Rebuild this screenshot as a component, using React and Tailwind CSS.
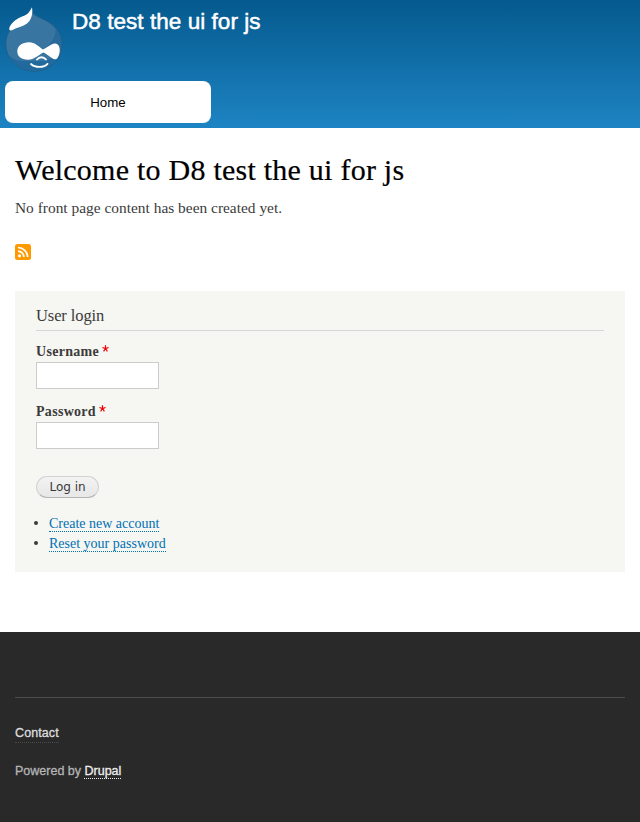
const serif = 'font-["Liberation_Serif",serif]';

function Logo() {
  return (
    <svg className="block h-[66px] w-[60px] shrink-0" viewBox="0 0 60 66">
      <path d="M27 1.300C27 5 27.500 7.500 30 9C33 11 36 12 39 13.500C50 19 57 27 57 38C57 54 45 65 29 65C13 65 0.800 53 0.800 38C0.800 29 5 23 10 18C16 12 26 12 27 1.300Z" fill="#3875a1" stroke="#1d5880" strokeWidth="0.700" />
      <path d="M39 13.800C49.500 19 56.600 27 56.600 38C56.600 46 54 51 51 54L36 46C44 40 51 32 50.500 24C50 19 45 16.500 39 13.800Z" fill="#26689a" opacity="0.850" />
      <path d="M2.500 48C9 55 14 55 24 55L40 55L55 49C51 58.500 42 64.500 29 64.500C15 64.500 6 58 2.500 48Z" fill="#1f679d" opacity="0.850" />
      <path d="M27 1.300C23 9 21 9 16 11C10 13.500 5.500 18 4.300 22C3.800 24.500 5.500 25 7.500 24C12 21.500 18 20.500 22 17.500C26.500 14 28 8 27 1.300Z" fill="#fff" />
      <path d="M24 36.300C30 36.300 34 41 38 43.500C42 42 45 38 50 37.500C55 37 56.500 46 52.500 52C50 56 45 50 38.500 46.500C33 49 29.500 53.700 23 53.700C16 53.700 12 50 12.300 45C12.500 40 17 36.300 24 36.300Z" fill="#fff" />
      <path d="M32 53.500C34.500 50.500 38.500 50.500 41 53.500M26 58C30 61.800 39 62 42.500 57.800" fill="none" stroke="#fff" strokeWidth="1.800" strokeLinecap="round" />
    </svg>
  );
}

function FeedIcon() {
  return (
    <svg className="block size-4" viewBox="0 0 16 16">
      <rect width="16" height="16" rx="2.500" fill="#ff9900" />
      <circle cx="4.500" cy="11.800" r="1.600" fill="#fff" />
      <path d="M3 7.200a6 6 0 0 1 5.900 5.900M3 3.500a9.700 9.700 0 0 1 9.600 9.600" fill="none" stroke="#fff" strokeWidth="1.700" />
    </svg>
  );
}

function Star() {
  return (
    <svg className="mt-[2px] ml-[3px] block size-[7px]" viewBox="0 0 7 7">
      <path d="M3.500 0.200V3.500M0.400 2.500L3.500 3.500L6.600 2.500M1.600 6.300L3.500 3.500L5.400 6.300" fill="none" stroke="#ee0000" strokeWidth="1.200" />
    </svg>
  );
}

function Field({ label, type }) {
  return (
    <label className="block h-[60px]">
      <span className="flex h-[19px]">
        <span className="text-[14px] leading-[18px] font-bold tracking-[0.3px]">{label}</span>
        <Star />
      </span>
      <input type={type} className="block h-[27px] w-[123px] border border-[#ccc] bg-white px-1 outline-none" />
    </label>
  );
}

export default function App() {
  return (
    <div className={`flex h-[822px] w-[640px] flex-col overflow-hidden bg-white text-[#3b3b3b] ${serif}`}>
      <header className='h-32 bg-linear-to-b from-[#055a8e] to-[#1d84c3] px-[5px] font-["Liberation_Sans",Arial,sans-serif]'>
        <div className="flex h-[81px] pt-[6px]">
          <Logo />
          <div className="ml-[7px] h-[30px] text-[22.5px] leading-[31px] tracking-[0.05px] whitespace-nowrap text-[#fffeff] [-webkit-text-stroke:0.5px_#fffeff]">D8 test the ui for js</div>
        </div>
        <nav className="flex h-[42px] w-[206px] items-center justify-center rounded-lg bg-white pt-px text-[13.3px] text-black">Home</nav>
      </header>

      <main className="h-[504px] px-[15px] pt-6">
        <h1 className="h-9 text-[30px] leading-9 tracking-[0.24px] whitespace-nowrap text-black [-webkit-text-stroke:0.2px_#000]">Welcome to D8 test the ui for js</h1>
        <p className="mt-2.5 h-5 text-[15.4px] leading-5 tracking-[0.01px] whitespace-nowrap">No front page content has been created yet.</p>
        <div className="mt-[26px]"><FeedIcon /></div>

        <section className="mt-[31px] h-[281px] bg-[#f6f6f2] px-[21px] pt-[14px]">
          <h2 className="h-[26px] border-b border-[#d6d6d6] text-[16.5px] leading-[21px] tracking-[-0.1px]">User login</h2>
          <form className="pt-3">
            <Field label="Username" type="text" />
            <Field label="Password" type="password" />
            <button type="button" className='mt-[13px] flex h-[22px] w-[63px] items-center justify-center rounded-full border border-[#d2d2d2] border-b-[#b4b4b4] bg-linear-to-b from-[#f3f3f3] to-[#e7e7e7] font-["DejaVu_Sans",sans-serif] text-[12px] text-[#3a3a3a]'>Log in</button>
          </form>
          <ul className="mt-[17px] text-[14px] leading-5 text-[#0071b3]">
            <li className="flex h-5 items-start before:mt-[6px] before:-ml-[2px] before:mr-[11px] before:size-1 before:rounded-full before:bg-[#3b3b3b]"><a className="h-[17px] border-b border-dotted border-[#0071b3] leading-[17px]">Create new account</a></li>
            <li className="flex h-5 items-start before:mt-[6px] before:-ml-[2px] before:mr-[11px] before:size-1 before:rounded-full before:bg-[#3b3b3b]"><a className="h-[17px] border-b border-dotted border-[#0071b3] leading-[17px]">Reset your password</a></li>
          </ul>
        </section>
      </main>

      <footer className='h-[190px] bg-[#292929] px-[15px] pt-[65px] font-["Liberation_Sans",Arial,sans-serif] text-[12.5px] text-[#b5b5b5]'>
        <div className="border-t border-[#4b4b4b] pt-[26px]">
          <a className="block h-[19px] w-[44px] border-b border-dotted border-[#4b4b4b] leading-[18px] tracking-[0.1px] whitespace-nowrap text-[#dedede] [-webkit-text-stroke:0.3px_#dedede]">Contact</a>
          <div className="mt-[19px] flex leading-[18px] whitespace-pre [-webkit-text-stroke:0.3px_#b5b5b5]">Powered by <a className="h-[17px] border-b border-dotted border-[#eee] text-[#eee] [-webkit-text-stroke:0.3px_#eee]">Drupal</a></div>
        </div>
      </footer>
    </div>
  );
}
